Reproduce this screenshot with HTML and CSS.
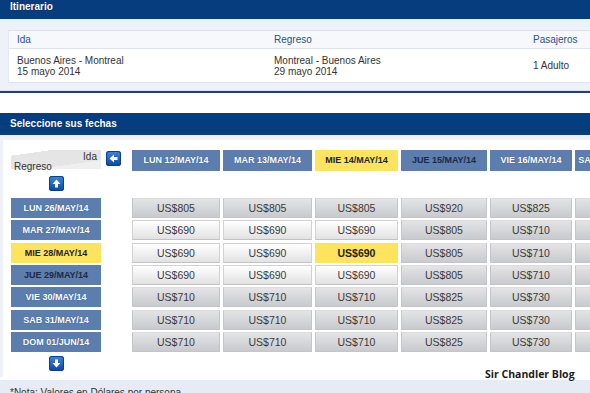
FILE: index.html
```html
<!DOCTYPE html>
<html lang="es">
<head>
    <meta charset="UTF-8">
    <title>Itinerario - Seleccione sus fechas</title>
    <link rel="stylesheet" href="styles.css">
</head>
<body>
    <div class="bar">Itinerario</div>
    <div class="itin-box">
        <div class="itin-table">
            <div class="itin-head">Ida</div>
            <div class="itin-head">Regreso</div>
            <div class="itin-head">Pasajeros</div>
            <div class="itin-cell">Buenos Aires - Montreal<br>15 mayo 2014</div>
            <div class="itin-cell">Montreal - Buenos Aires<br>29 mayo 2014</div>
            <div class="itin-cell">1 Adulto</div>
        </div>
    </div>

    <div class="bar bar-tall">Seleccione sus fechas</div>
    <div class="dates-box">
        <div class="dates-panel">
            <div class="dates-grid" id="grid">
                <div class="corner"><span class="corner-ida">Ida</span><span class="corner-reg">Regreso</span></div>
                <div class="arrow-cell"><span class="arrow-btn"><svg width="15" height="15" viewBox="0 0 15 15"><polygon points="3.5,7.5 8,3.5 8,6 11.5,6 11.5,9 8,9 8,11.5" fill="#fff"/></svg></span></div>
                <div class="day head">LUN 12/MAY/14</div>
                <div class="day head">MAR 13/MAY/14</div>
                <div class="day head selected">MIE 14/MAY/14</div>
                <div class="day head dark">JUE 15/MAY/14</div>
                <div class="day head">VIE 16/MAY/14</div>
                <div class="day head">SAB 17/MAY/14</div>

                <div class="up-cell"><span class="arrow-btn"><svg width="15" height="15" viewBox="0 0 15 15"><polygon points="7.5,3.5 11.5,8 9,8 9,11.5 6,11.5 6,8 3.5,8" fill="#fff"/></svg></span></div>
            </div>
        </div>
    </div>
    <div class="note">*Nota: Valores en Dólares por persona</div>

    <div class="watermark">Sir Chandler Blog</div>

    <script>
        // Return days and prices (one row per return date)
        const rows = [
            { day: "LUN 26/MAY/14", prices: [805, 805, 805, 920, 825, 805] },
            { day: "MAR 27/MAY/14", prices: [690, 690, 690, 805, 710, 690] },
            { day: "MIE 28/MAY/14", prices: [690, 690, 690, 805, 710, 690], selected: true },
            { day: "JUE 29/MAY/14", prices: [690, 690, 690, 805, 710, 690], dark: true },
            { day: "VIE 30/MAY/14", prices: [710, 710, 710, 825, 730, 710] },
            { day: "SAB 31/MAY/14", prices: [710, 710, 710, 825, 730, 710] },
            { day: "DOM 01/JUN/14", prices: [710, 710, 710, 825, 730, 710] }
        ];
        const grid = document.getElementById("grid");

        rows.forEach(row => {
            const label = document.createElement("div");
            label.className = "day label" + (row.selected ? " selected" : "") + (row.dark ? " dark" : "");
            label.textContent = row.day;
            grid.appendChild(label);
            grid.appendChild(document.createElement("div"));

            row.prices.forEach((price, i) => {
                const cell = document.createElement("div");
                cell.className = "price";
                if (row.selected && i === 2) cell.className += " chosen";
                else if (price === 690 && i < 5) cell.className += " low";
                cell.textContent = "US$" + price;
                grid.appendChild(cell);
            });
        });

        // Down arrow under the return days
        const down = document.createElement("div");
        down.className = "up-cell down-cell";
        down.innerHTML = '<span class="arrow-btn"><svg width="15" height="15" viewBox="0 0 15 15"><polygon points="7.5,11.5 11.5,7 9,7 9,3.5 6,3.5 6,7 3.5,7" fill="#fff"/></svg></span>';
        grid.appendChild(down);
    </script>
</body>
</html>
```

FILE: styles.css
```css
body {
    margin: 0;
    width: 590px;
    height: 393px;
    overflow: hidden;
    position: relative;
    font-family: "Liberation Sans", Arial, sans-serif;
    font-size: 10px;
    color: #333;
    background: #fff;
}

.bar {
    height: 19px;
    line-height: 14px;
    padding-left: 10px;
    background: #063d7f;
    color: #fff;
    font-weight: bold;
    font-size: 10px;
    text-shadow: 0 0 1px #021d45;
}

.bar-tall {
    height: 22px;
    line-height: 22px;
}

.itin-box {
    background: #eef1f8;
    padding: 11px 0 8px 8px;
    border-bottom: 2px solid #1c3f86;
    box-shadow: inset 0 -1px 0 #d9e0ee;
    margin-bottom: 20px;
}

.itin-table {
    display: grid;
    grid-template-columns: 257px 259px 1fr;
    background: #fff;
    border-top: 1px solid #dde3ef;
    border-left: 1px solid #e3e8f1;
    border-bottom: 1px solid #dde3ef;
}

.itin-head {
    height: 17px;
    line-height: 17px;
    padding-left: 8px;
    color: #2a5190;
    background: #f7f8fb;
    border-bottom: 1px solid #dde3ef;
}

.itin-cell {
    height: 33px;
    display: flex;
    align-items: center;
    padding-left: 8px;
    line-height: 11px;
    color: #333;
}

.dates-box {
    background: #eef1f8;
    padding: 5px 0 0 3px;
}

.dates-panel {
    background: #fff;
    padding: 10px 0 5px 8px;
    overflow: hidden;
}

.dates-grid {
    display: grid;
    grid-template-columns: 90px 25px 88px 89px 83px 86px 82px 72px;
    grid-template-rows: 21px 22.33px repeat(7, 20px) 18px;
    column-gap: 3px;
    row-gap: 2.33px;
    width: 700px;
}

.corner {
    position: relative;
    height: 19px;
    background: linear-gradient(172deg, #fff 0 18%, #e5e5e5 18% 72%, #efefef 72%);
    color: #333;
}

.corner-ida {
    position: absolute;
    right: 4px;
    top: 1px;
}

.corner-reg {
    position: absolute;
    left: 3px;
    bottom: -3px;
}

.arrow-cell {
    padding: 1px 0 0 2px;
}

.up-cell {
    grid-column: 1;
    display: flex;
    justify-content: center;
    align-items: flex-start;
    padding-top: 3px;
}

.down-cell {
    padding-top: 2px;
}

.arrow-btn {
    display: block;
    width: 15px;
    height: 15px;
    border-radius: 3px;
    background: linear-gradient(#3f86dc, #0b47a3);
    box-shadow: inset 0 0 0 1px #0a3f8f;
}

.arrow-btn svg {
    display: block;
}

.day {
    background: #5b7eae;
    color: #fff;
    font-weight: bold;
    font-size: 9px;
    line-height: 20px;
    text-align: center;
    white-space: nowrap;
    overflow: hidden;
    text-shadow: 0 0 1px #2e4a75;
}

.day.head {
    line-height: 21px;
}

.day.label {
    grid-column: 1;
}

.day.dark {
    color: #1b2946;
    text-shadow: none;
}

.day.selected {
    background: #fde35e;
    color: #1b2430;
    text-shadow: none;
}

.price {
    height: 18px;
    line-height: 18px;
    text-align: center;
    font-size: 10.5px;
    color: #3a3a3a;
    border: 1px solid #c4c5c9;
    border-top-color: #dcdcde;
    background: linear-gradient(#e4e4e6, #c9cacd);
}

.price.low {
    border-color: #d2d2d4;
    border-bottom-color: #c2c2c4;
    background: linear-gradient(#ffffff, #e2e2e3);
}

.price.chosen {
    border-color: #fde35e;
    background: #fde35e;
    color: #1b1b1b;
    font-weight: bold;
}

.note {
    margin-top: 3px;
    padding: 7px 0 0 10px;
    height: 20px;
    background: #e6ebf6;
    color: #333;
}

.watermark {
    position: absolute;
    left: 485px;
    top: 367px;
    font-family: "Open Sans", sans-serif;
    font-weight: bold;
    font-size: 10.5px;
    color: #1c1c1c;
    text-shadow: 0 0 2px #fff;
}
```
